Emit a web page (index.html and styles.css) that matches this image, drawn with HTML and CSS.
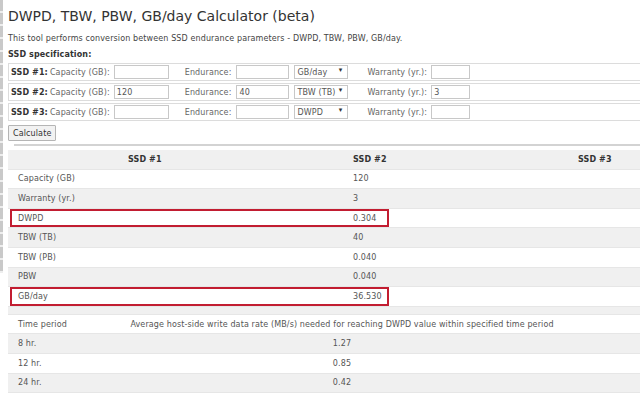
FILE: index.html
```html
<!DOCTYPE html>
<html lang="en">
<head>
    <meta charset="UTF-8">
    <meta name="viewport" content="width=device-width, initial-scale=1.0">
    <title>DWPD, TBW, PBW, GB/day Calculator</title>
    <link rel="stylesheet" href="styles.css">
</head>
<body>
    <div class="edge"></div>
    <h1 class="title">DWPD, TBW, PBW, GB/day Calculator (beta)</h1>
    <p class="intro">This tool performs conversion between SSD endurance parameters - DWPD, TBW, PBW, GB/day.</p>

    <form class="spec">
        <div class="spec-heading">SSD specification:</div>
        <div class="spec-row">
            <b class="ssd">SSD #1:</b>
            <label class="lbl">Capacity (GB):</label>
            <input class="field cap" type="text" value="">
            <label class="lbl endurance">Endurance:</label>
            <input class="field endur" type="text" value="">
            <span class="select"><select><option>GB/day</option></select></span>
            <label class="lbl warranty">Warranty (yr.):</label>
            <input class="field warr" type="text" value="">
        </div>
        <div class="spec-row">
            <b class="ssd">SSD #2:</b>
            <label class="lbl">Capacity (GB):</label>
            <input class="field cap" type="text" value="120">
            <label class="lbl endurance">Endurance:</label>
            <input class="field endur" type="text" value="40">
            <span class="select"><select><option>TBW (TB)</option></select></span>
            <label class="lbl warranty">Warranty (yr.):</label>
            <input class="field warr" type="text" value="3">
        </div>
        <div class="spec-row">
            <b class="ssd">SSD #3:</b>
            <label class="lbl">Capacity (GB):</label>
            <input class="field cap" type="text" value="">
            <label class="lbl endurance">Endurance:</label>
            <input class="field endur" type="text" value="">
            <span class="select"><select><option>DWPD</option></select></span>
            <label class="lbl warranty">Warranty (yr.):</label>
            <input class="field warr" type="text" value="">
        </div>
        <button class="calc" type="button">Calculate</button>
    </form>

    <hr class="sep">

    <div class="results">
        <div class="row head">
            <div class="pair"><div class="c1">SSD #1</div><div class="c2">SSD #2</div></div>
            <div class="c3">SSD #3</div>
        </div>
        <div class="row">
            <div class="pair"><div class="c1">Capacity (GB)</div><div class="c2">120</div></div>
            <div class="c3"></div>
        </div>
        <div class="row alt">
            <div class="pair"><div class="c1">Warranty (yr.)</div><div class="c2">3</div></div>
            <div class="c3"></div>
        </div>
        <div class="row">
            <div class="pair marked"><div class="c1">DWPD</div><div class="c2">0.304</div></div>
            <div class="c3"></div>
        </div>
        <div class="row alt">
            <div class="pair"><div class="c1">TBW (TB)</div><div class="c2">40</div></div>
            <div class="c3"></div>
        </div>
        <div class="row">
            <div class="pair"><div class="c1">TBW (PB)</div><div class="c2">0.040</div></div>
            <div class="c3"></div>
        </div>
        <div class="row alt">
            <div class="pair"><div class="c1">PBW</div><div class="c2">0.040</div></div>
            <div class="c3"></div>
        </div>
        <div class="row">
            <div class="pair marked"><div class="c1">GB/day</div><div class="c2">36.530</div></div>
            <div class="c3"></div>
        </div>
        <div class="row filler"></div>
    </div>

    <div class="rates">
        <div class="rate-row">
            <div class="period">Time period</div>
            <div class="rate">Average host-side write data rate (MB/s) needed for reaching DWPD value within specified time period</div>
        </div>
        <div class="rate-row alt">
            <div class="period">8 hr.</div>
            <div class="rate">1.27</div>
        </div>
        <div class="rate-row">
            <div class="period">12 hr.</div>
            <div class="rate">0.85</div>
        </div>
        <div class="rate-row alt">
            <div class="period">24 hr.</div>
            <div class="rate">0.42</div>
        </div>
    </div>
</body>
</html>
```

FILE: styles.css
```css
body {
    margin: 0;
    padding-left: 8px;
    font-family: "DejaVu Sans", Verdana, sans-serif;
    font-size: 8px;
    letter-spacing: 0.12px;
    color: #555;
    background: #fff;
    overflow: hidden;
}

/* striped strip on the far left of the capture */
.edge {
    position: fixed;
    top: 0;
    left: 0;
    width: 3px;
    height: 273px;
    background: repeating-linear-gradient(to bottom, #c9c9c9 0, #c9c9c9 11px, #eeeeee 11px, #eeeeee 13px);
}

.title {
    margin: 6px 0 0;
    font-size: 14px;
    font-weight: normal;
    letter-spacing: 0;
    line-height: 20px;
    color: #333;
}

.intro {
    margin: 7px 0 0;
    line-height: 12px;
    color: #444;
}

.spec-heading {
    margin-top: 4px;
    line-height: 12px;
    font-weight: bold;
    color: #333;
}

.spec-row {
    display: flex;
    align-items: center;
    height: 16px;
    margin-top: 2px;
    padding-left: 2px;
    border: 1px solid #dcdcdc;
    border-right: 0;
    color: #666;
}
.spec-row:first-of-type {
    margin-top: 1px;
}

.ssd {
    color: #333;
    margin-right: 2px;
}

.field {
    height: 14px;
    padding: 0 2px;
    margin: 0 0 0 4px;
    border: 1px solid #c8c8c8;
    font: inherit;
    letter-spacing: inherit;
    color: #555;
    box-sizing: border-box;
}
.cap { width: 55px; }
.endur { width: 53px; margin-left: 5px; }
.warr { width: 39px; }

.endurance { margin-left: 16px; }
.warranty { margin-left: 19px; }

.select {
    position: relative;
    display: inline-block;
    margin-left: 5px;
}
.select select {
    appearance: none;
    width: 54px;
    height: 14px;
    padding: 0 2px;
    border: 1px solid #c8c8c8;
    background: #fff;
    font: inherit;
    letter-spacing: inherit;
    color: #555;
    box-sizing: border-box;
}
.select::after {
    content: "\25BE";
    position: absolute;
    right: 6px;
    top: 1px;
    font-size: 7px;
    color: #333;
    pointer-events: none;
}

.calc {
    display: block;
    margin-top: 4px;
    height: 16px;
    padding: 0 4px;
    border: 1px solid #b5b5b5;
    border-radius: 1px;
    background: #f2f2f2;
    font: inherit;
    letter-spacing: inherit;
    color: #333;
}

.sep {
    margin: 3px 0 0 6px;
    height: 2px;
    border: 0;
    background: #d3d3d3;
}

.results {
    margin-top: 4px;
}

.row {
    display: flex;
    height: 19.6px;
    border-bottom: 1px solid #e6e6e6;
    box-sizing: border-box;
}
.row.head,
.row.alt,
.row.filler {
    background: #f0f0f0;
}
.row.filler {
    height: 8px;
}

.pair {
    display: flex;
    width: 381px;
    box-sizing: border-box;
}
.pair.marked {
    outline: 2px solid #c21d31;
    outline-offset: -2px;
    margin-left: 2px;
    width: 379px;
}
.pair.marked .c1 { padding-left: 8px; }

.c1, .c2, .c3 {
    display: flex;
    align-items: center;
}
.c1 {
    flex: 1;
    padding-left: 10px;
}
.c2 {
    width: 44px;
    padding-left: 8px;
    box-sizing: border-box;
}
.c3 {
    flex: 1;
}

.head .c1,
.head .c2,
.head .c3 {
    font-weight: bold;
    color: #333;
}
.head .c1 {
    padding-left: 120px;
}
.head .c3 {
    padding-left: 189px;
}

.rate-row {
    display: flex;
    height: 19.6px;
    align-items: center;
    border-bottom: 1px solid #e6e6e6;
    box-sizing: border-box;
}
.rate-row.alt {
    background: #f0f0f0;
}
.period {
    width: 110px;
    padding-left: 10px;
    box-sizing: border-box;
}
.rate {
    width: 448px;
    text-align: center;
}
```
